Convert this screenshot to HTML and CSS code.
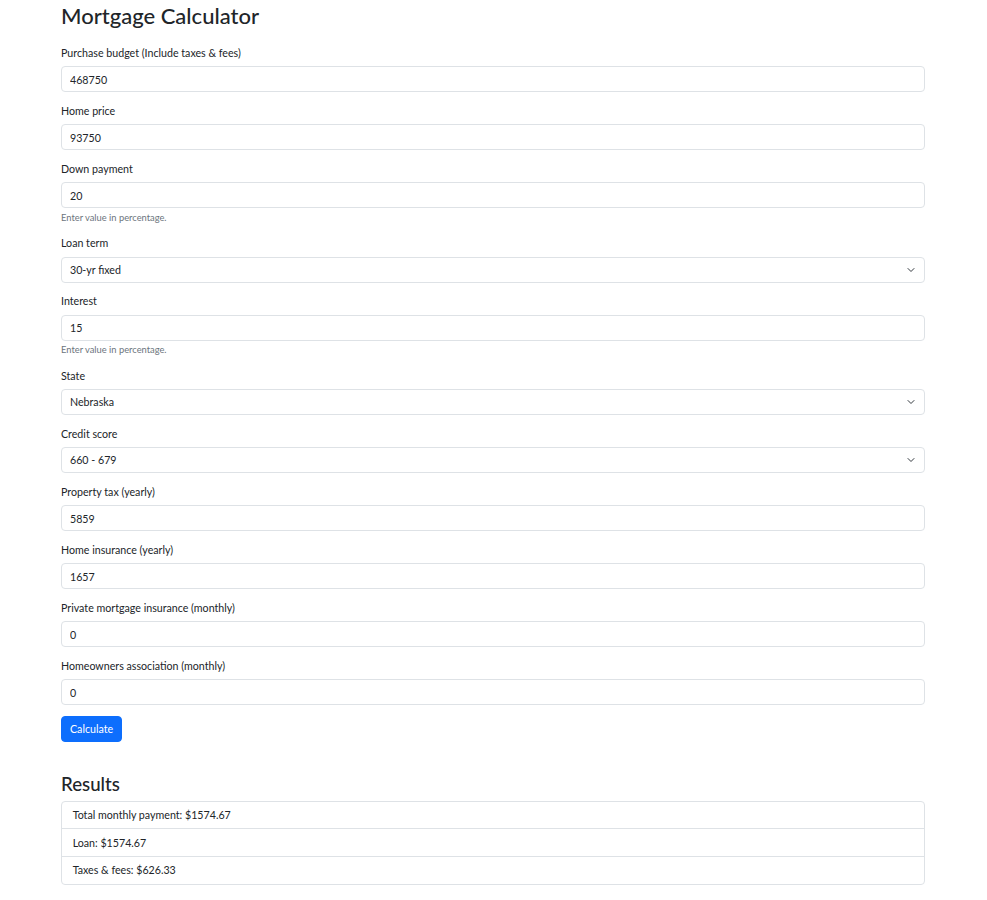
FILE: index.html
```html
<!DOCTYPE html>
<html lang="en">
<head>
<meta charset="utf-8">
<title>Mortgage Calculator</title>
<link rel="stylesheet" href="styles.css">
</head>
<body>
<main class="container">
  <h1 class="title">Mortgage Calculator</h1>
  <form class="form">
    <div class="field">
      <label class="label" for="budget">Purchase budget (Include taxes &amp; fees)</label>
      <input class="control" id="budget" type="text" value="468750">
    </div>
    <div class="field">
      <label class="label" for="price">Home price</label>
      <input class="control" id="price" type="text" value="93750">
    </div>
    <div class="field">
      <label class="label" for="down">Down payment</label>
      <input class="control" id="down" type="text" value="20">
      <div class="help">Enter value in percentage.</div>
    </div>
    <div class="field">
      <label class="label" for="term">Loan term</label>
      <div class="control select"><span>30-yr fixed</span><svg class="chev" viewBox="0 0 16 16" width="11" height="11"><path d="M2 5l6 6 6-6" fill="none" stroke="#343a40" stroke-width="2" stroke-linecap="round" stroke-linejoin="round"/></svg></div>
    </div>
    <div class="field">
      <label class="label" for="interest">Interest</label>
      <input class="control" id="interest" type="text" value="15">
      <div class="help">Enter value in percentage.</div>
    </div>
    <div class="field">
      <label class="label">State</label>
      <div class="control select"><span>Nebraska</span><svg class="chev" viewBox="0 0 16 16" width="11" height="11"><path d="M2 5l6 6 6-6" fill="none" stroke="#343a40" stroke-width="2" stroke-linecap="round" stroke-linejoin="round"/></svg></div>
    </div>
    <div class="field">
      <label class="label">Credit score</label>
      <div class="control select"><span>660 - 679</span><svg class="chev" viewBox="0 0 16 16" width="11" height="11"><path d="M2 5l6 6 6-6" fill="none" stroke="#343a40" stroke-width="2" stroke-linecap="round" stroke-linejoin="round"/></svg></div>
    </div>
    <div class="field">
      <label class="label" for="tax">Property tax (yearly)</label>
      <input class="control" id="tax" type="text" value="5859">
    </div>
    <div class="field">
      <label class="label" for="ins">Home insurance (yearly)</label>
      <input class="control" id="ins" type="text" value="1657">
    </div>
    <div class="field">
      <label class="label" for="pmi">Private mortgage insurance (monthly)</label>
      <input class="control" id="pmi" type="text" value="0">
    </div>
    <div class="field">
      <label class="label" for="hoa">Homeowners association (monthly)</label>
      <input class="control" id="hoa" type="text" value="0">
    </div>
    <button class="btn" type="button">Calculate</button>
  </form>
  <section class="results">
    <h2 class="results-title">Results</h2>
    <ul class="list">
      <li class="item">Total monthly payment: $1574.67</li>
      <li class="item">Loan: $1574.67</li>
      <li class="item">Taxes &amp; fees: $626.33</li>
    </ul>
  </section>
</main>
</body>
</html>
```
FILE: styles.css
```css
* { box-sizing: border-box; }
html, body { margin: 0; padding: 0; background: #fff; }
body {
  font-family: "Segoe UI", Lato, "Open Sans", "Liberation Sans", sans-serif;
  font-size: 10.667px;
  line-height: 16px;
  color: #212529;
}
.container {
  width: 864px;
  margin-left: 61px;
  padding-top: 3px;
}
.title {
  font-size: 22px;
  font-weight: 500;
  line-height: 26px;
  margin: 0 0 16px;
}
.form { margin: 0; }
.field { margin-bottom: 10.667px; }
.label {
  display: block;
  margin-bottom: 5.333px;
}
.control {
  display: block;
  width: 100%;
  height: 26px;
  padding: 4px 8px;
  font: inherit;
  font-size: 10.667px;
  line-height: 16px;
  color: #212529;
  background: #fff;
  border: 1px solid #dee2e6;
  border-radius: 4px;
  outline: none;
}
.select {
  display: flex;
  align-items: center;
  justify-content: space-between;
  padding-right: 8px;
}
.chev { width: 10px; height: 8px; flex: none; }
.help {
  margin-top: 2.5px;
  font-size: 9.333px;
  line-height: 14px;
  color: #6c757d;
}
.btn {
  display: block;
  height: 26px;
  padding: 4px 8px;
  font: inherit;
  font-size: 10.667px;
  line-height: 16px;
  color: #fff;
  background: #0d6efd;
  border: 1px solid #0d6efd;
  border-radius: 4px;
}
.results { margin-top: 31px; }
.results-title {
  font-size: 18.667px;
  font-weight: 500;
  line-height: 22.4px;
  margin: 0 0 5.333px;
}
.list {
  list-style: none;
  margin: 0;
  padding: 0;
  border: 1px solid #dee2e6;
  border-radius: 4px;
}
.item {
  padding: 5.333px 10.667px;
  line-height: 16px;
  border-top: 1px solid #dee2e6;
}
.item:first-child { border-top: 0; }
```
